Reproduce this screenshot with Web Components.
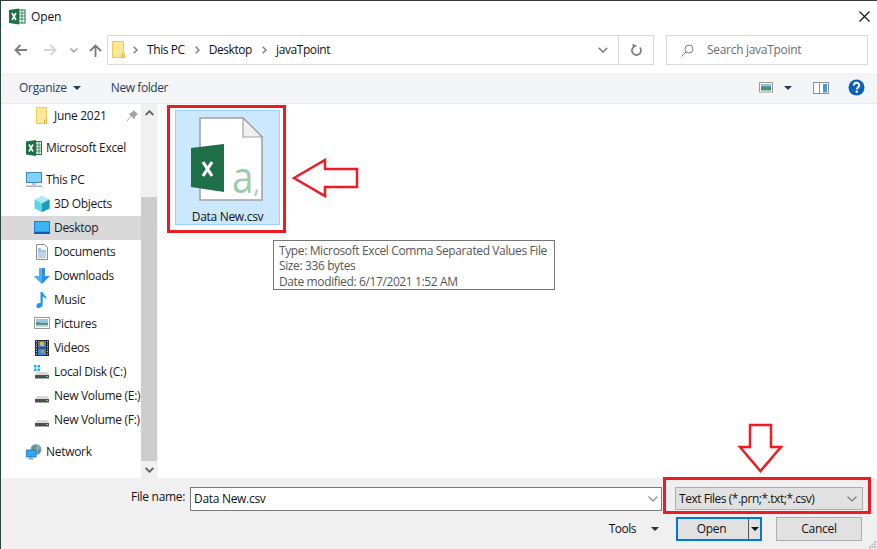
<!DOCTYPE html>
<html>
<head>
<meta charset="utf-8">
<title>Open</title>
<style>
	html, body { margin: 0; padding: 0; background: white; }
	body { font: 12px/16px "Open Sans", "Noto Sans", sans-serif; letter-spacing: -0.3px; color: #111; overflow: hidden; }
</style>
</head>
<body>

<open-dialog>
	<title-bar slot="title">
		<svg slot="icon" width="17" height="17" viewBox="0 0 17 17"><rect x="7" y="2" width="9" height="13" fill="#fff" stroke="#1e7145"/><path d="M10 2v13M13 2v13M7 5h9M7 8h9M7 11h9" stroke="#1e7145" stroke-width=".8"/><path d="M0 2l10-1.500v16l-10-1.500z" fill="#1e7145"/><path d="M3 5l4 7M7 5l-4 7" stroke="#fff" stroke-width="1.600"/></svg>
		Open
	</title-bar>

	<address-bar slot="address"></address-bar>
	<tool-bar slot="tools"></tool-bar>

	<nav-pane slot="nav">
		<nav-item level="1" pin>
			<svg slot="icon" width="16" height="18" viewBox="0 0 16 18"><path d="M2.500.500h10v16h-10z" fill="#ffe79c" stroke="#ecc94f"/><path d="M10.500 13h2v3.500h-2z" fill="#ffe79c" stroke="#dcb53c"/></svg>
			June 2021
		</nav-item>
		<nav-item gap>
			<svg slot="icon" width="16" height="16" viewBox="0 0 16 16"><rect x="7" y="1.500" width="8.500" height="13" fill="#fff" stroke="#1e7145"/><path d="M10 2v12M13 2v12M7 5h8M7 8h8M7 11h8" stroke="#1e7145" stroke-width=".8"/><path d="M0 1.500l10-1.500v16l-10-1.500z" fill="#1e7145"/><path d="M3 4.500l4 7M7 4.500l-4 7" stroke="#fff" stroke-width="1.600"/></svg>
			Microsoft Excel
		</nav-item>
		<nav-item gap>
			<svg slot="icon" width="16" height="16" viewBox="0 0 16 16"><rect x=".500" y=".500" width="15" height="10" fill="#7fd0fb" stroke="#3f88b8"/><path d="M6 11h4v2H6z" fill="#b6c3cc"/><path d="M0 13.500h16v1.500H0z" fill="#a5b4bf"/></svg>
			This PC
		</nav-item>
		<nav-item level="1">
			<svg slot="icon" width="16" height="16" viewBox="0 0 16 16"><path d="M8 0l7.500 3.500v9L8 16 .500 12.500v-9z" fill="#5fd6e6"/><path d="M8 7.500L.500 3.500 8 0l7.500 3.500z" fill="#a9eef5"/><path d="M8 7.500v8.500l7.500-3.500v-9z" fill="#1f9cbc"/></svg>
			3D Objects
		</nav-item>
		<nav-item level="1" selected>
			<svg slot="icon" width="16" height="14" viewBox="0 0 16 14"><rect width="16" height="12" fill="#1b7fd6"/><rect x="1" y="1" width="14" height="9.500" fill="#3eb3f5"/><path d="M0 11h16v2H0z" fill="#0e5da6"/></svg>
			Desktop
		</nav-item>
		<nav-item level="1">
			<svg slot="icon" width="16" height="16" viewBox="0 0 16 16"><path d="M2.500.500h8l3 3v12h-11z" fill="#fdfdfd" stroke="#8c8c8c"/><path d="M4 5h3M4 7h8" stroke="#2f8fdc"/><path d="M4 9h8M4 11h8M4 13h8" stroke="#7fa9cc"/></svg>
			Documents
		</nav-item>
		<nav-item level="1">
			<svg slot="icon" width="16" height="16" viewBox="0 0 16 16"><path d="M5 0h6v8h5l-8 8-8-8h5z" fill="#2f8fe0"/><path d="M5 0h3v16L0 8h5z" fill="#54aef0"/></svg>
			Downloads
		</nav-item>
		<nav-item level="1">
			<svg slot="icon" width="16" height="16" viewBox="0 0 16 16"><path d="M6.500 0h2.200c.5 3 4.300 3.500 3.800 8-.7-2-2.200-3-3.800-3.200v8c0 2-2 3.200-4.200 3.200S2 14.800 2.500 13.200s2.500-2.500 4-2z" fill="#1e98ea"/></svg>
			Music
		</nav-item>
		<nav-item level="1">
			<svg slot="icon" width="16" height="13" viewBox="0 0 16 13"><rect x=".500" y=".500" width="15" height="11" fill="#fff" stroke="#9a9a9a"/><rect x="2" y="2" width="12" height="4" fill="#9bc6e6"/><path d="M2 5.500c3-1 5 .5 7 .5s3-.5 5 0V10H2z" fill="#5f8f80"/><path d="M2 8h12v2H2z" fill="#c3d7d0"/></svg>
			Pictures
		</nav-item>
		<nav-item level="1">
			<svg slot="icon" width="16" height="16" viewBox="0 0 16 16"><rect x="1" width="14" height="16" fill="#2b2b2b"/><rect x="4" y="1" width="8" height="6.500" fill="#3f7fc4"/><rect x="4" y="8.500" width="8" height="6.500" fill="#2f8ae0"/><path d="M6 2h4v4H6z" fill="#e3b53a"/><path d="M7 10h3v3H7z" fill="#e08a2a"/><path d="M2 1.500h1M2 4h1M2 6.500h1M2 9h1M2 11.500h1M2 14h1M13 1.500h1M13 4h1M13 6.500h1M13 9h1M13 11.500h1M13 14h1" stroke="#ddd"/></svg>
			Videos
		</nav-item>
		<nav-item level="1">
			<svg slot="icon" width="16" height="16" viewBox="0 0 16 16"><path d="M0 1h2.500v2.500H0zM3.500 1H6v2.500H3.500zM0 4.500h2.500V7H0zM3.500 4.500H6V7H3.500z" fill="#16b4ee"/><path d="M3 8h10l2 3.500H1z" fill="#d8d8d8"/><rect x="1" y="11" width="14" height="3.500" fill="#4f4f4f"/><path d="M12 12h2v1h-2z" fill="#5fe05f"/></svg>
			Local Disk (C:)
		</nav-item>
		<nav-item level="1">
			<svg slot="icon" width="16" height="16" viewBox="0 0 16 16"><path d="M3 8h10l2 3.500H1z" fill="#d8d8d8"/><rect x="1" y="11" width="14" height="3.500" fill="#4f4f4f"/><path d="M12 12h2v1h-2z" fill="#5fe05f"/></svg>
			New Volume (E:)
		</nav-item>
		<nav-item level="1">
			<svg slot="icon" width="16" height="16" viewBox="0 0 16 16"><path d="M3 8h10l2 3.500H1z" fill="#d8d8d8"/><rect x="1" y="11" width="14" height="3.500" fill="#4f4f4f"/><path d="M12 12h2v1h-2z" fill="#5fe05f"/></svg>
			New Volume (F:)
		</nav-item>
		<nav-item gap>
			<svg slot="icon" width="16" height="16" viewBox="0 0 16 16"><circle cx="10" cy="5.500" r="5.500" fill="#7fa7c7"/><path d="M7 2c2-1 4 0 3 2s-3 1-3 3-2-3 0-5zM12 6l3-1c0 3-2 5-3 5z" fill="#5c9a6a"/><rect y="6" width="10" height="7" fill="#35a6ee" stroke="#1e6fb0" stroke-width=".8"/><path d="M3.500 13h3v1.500h-3zM2 14.500h6v1H2z" fill="#8fa5b5"/></svg>
			Network
		</nav-item>
	</nav-pane>

	<file-tile slot="files" name="Data New.csv"></file-tile>
	<file-footer slot="footer"></file-footer>

	<file-tip slot="overlay">
		<div>Type: Microsoft Excel Comma Separated Values File</div>
		<div>Size: 336 bytes</div>
		<div>Date modified: 6/17/2021 1:52 AM</div>
	</file-tip>
	<mark-box slot="overlay" style="left:166px;top:104px;width:119px;height:128px"></mark-box>
	<mark-box slot="overlay" style="left:662px;top:476px;width:208px;height:37px"></mark-box>
	<svg slot="overlay" style="position:absolute;left:-1px;top:-1px;pointer-events:none" width="877" height="549" fill="none" stroke="#ed1c24" stroke-width="2.500">
		<path d="M294 178L325 160V169H357V187H325V196Z"/>
		<path d="M750 425H771V447H781L760.500 471L740 447H750Z"/>
	</svg>
</open-dialog>

<script>
	const FONT = '"Open Sans", "Noto Sans", sans-serif';

	function shadow(el, html)
	{
		const root = el.attachShadow({mode: 'open'});
		root.innerHTML = html;
		return root;
	}

	customElements.define('open-dialog',
		class extends HTMLElement
		{
			constructor()
			{
				super();
				shadow(this, `
					<style>
						:host {
							display: flex;
							flex-direction: column;
							position: relative;
							box-sizing: border-box;
							width: 877px;
							height: 549px;
							border-top: 1px solid #3a3a3a;
							border-left: 1px solid #24483a;
							background: white;
							overflow: hidden;
						}
						.main {
							display: flex;
							flex: 1;
							min-height: 0;
						}
						.files {
							flex: 1;
							padding: 6px 0 0 17px;
							border-left: 1px solid #f4f4f4;
						}
					</style>
					<slot name="title"></slot>
					<slot name="address"></slot>
					<slot name="tools"></slot>
					<div class="main">
						<slot name="nav"></slot>
						<div class="files"><slot name="files"></slot></div>
					</div>
					<slot name="footer"></slot>
					<slot name="overlay"></slot>
				`);
			}
		}
	);

	customElements.define('title-bar',
		class extends HTMLElement
		{
			constructor()
			{
				super();
				shadow(this, `
					<style>
						:host {
							display: flex;
							align-items: center;
							gap: 5px;
							height: 31px;
							padding: 0 7px 0 8px;
							letter-spacing: -0.1px;
						}
						.x { margin-left: auto; display: block; }
						::slotted(svg) { display: block; }
					</style>
					<slot name="icon"></slot>
					<slot></slot>
					<svg class="x" width="11" height="11" viewBox="0 0 11 11" stroke="#111" stroke-width="1.100"><path d="M.5 .5l10 10M10.500 .5L.5 10.500"/></svg>
				`);
			}
		}
	);

	customElements.define('address-bar',
		class extends HTMLElement
		{
			constructor()
			{
				super();
				shadow(this, `
					<style>
						:host {
							display: flex;
							box-sizing: border-box;
							height: 41px;
							padding: 3px 0 0 13px;
						}
						svg { display: block; flex: none; }
						.nav { display: flex; align-items: center; height: 30px; width: 93px; }
						.box {
							display: flex;
							align-items: center;
							box-sizing: border-box;
							height: 30px;
							border: 1px solid #d9d9d9;
						}
						.path { width: 547px; letter-spacing: -0.42px; }
						.path .sep { margin: 0 9px 0 10px; }
						.path .end { margin-left: auto; margin-right: 10px; }
						.refresh {
							width: 34px;
							height: 28px;
							display: flex;
							align-items: center;
							justify-content: center;
							border-left: 1px solid #d9d9d9;
						}
						.search {
							width: 202px;
							margin-left: 12px;
							padding-left: 14px;
							color: #6d6d6d;
						}
						.search svg { margin-right: 13px; }
					</style>
					<div class="nav">
						<svg width="13" height="12" viewBox="0 0 13 12" fill="none" stroke="#7a7a7a" stroke-width="1.800"><path d="M13 6H2M6.500 1L1.500 6l5 5"/></svg>
						<svg style="margin-left:17px" width="13" height="12" viewBox="0 0 13 12" fill="none" stroke="#d4d4d4" stroke-width="1.800"><path d="M0 6h11M6.500 1l5 5-5 5"/></svg>
						<svg style="margin-left:13px" width="8" height="5" viewBox="0 0 8 5" fill="none" stroke="#9c9c9c" stroke-width="1.400"><path d="M.5 .5L4 4 7.500 .5"/></svg>
						<svg style="margin-left:11px" width="13" height="13" viewBox="0 0 13 13" fill="none" stroke="#7a7a7a" stroke-width="1.800"><path d="M6.500 13V2M1 7l5.500-5.500L12 7"/></svg>
					</div>
					<div class="box path">
						<svg style="margin-left:4px" width="14" height="18" viewBox="0 0 14 18"><path d="M.5 .5h11v16H.5z" fill="#ffe79c" stroke="#ecc94f"/><path d="M10 13h2.500v3.500H10z" fill="#ffe79c" stroke="#dcb53c"/></svg>
						<svg class="sep" style="margin-left:7px" width="5" height="8" viewBox="0 0 5 8" fill="none" stroke="#7d7d7d" stroke-width="1.400"><path d="M.7 .7L4 4 .7 7.300"/></svg>
						<span>This PC</span>
						<svg class="sep" width="5" height="8" viewBox="0 0 5 8" fill="none" stroke="#7d7d7d" stroke-width="1.400"><path d="M.7 .7L4 4 .7 7.300"/></svg>
						<span>Desktop</span>
						<svg class="sep" width="5" height="8" viewBox="0 0 5 8" fill="none" stroke="#7d7d7d" stroke-width="1.400"><path d="M.7 .7L4 4 .7 7.300"/></svg>
						<span>javaTpoint</span>
						<svg class="end" width="10" height="6" viewBox="0 0 10 6" fill="none" stroke="#7d7d7d" stroke-width="1.600"><path d="M.7 .7L5 5 9.300 .7"/></svg>
						<div class="refresh">
							<svg width="11" height="12" viewBox="0 0 11 12" fill="none" stroke="#7d7d7d" stroke-width="1.700"><path d="M8.800 3.500A4.500 4.500 0 1 1 5.500 2H2.500M2.500 0v3"/></svg>
						</div>
					</div>
					<div class="box search">
						<svg width="13" height="13" viewBox="0 0 13 13" fill="none" stroke="#7d7d7d"><circle cx="8" cy="5" r="4"/><path d="M5 8l-4.500 4.500"/></svg>
						<span>Search javaTpoint</span>
					</div>
				`);
			}
		}
	);

	customElements.define('tool-bar',
		class extends HTMLElement
		{
			constructor()
			{
				super();
				shadow(this, `
					<style>
						:host {
							display: flex;
							align-items: center;
							box-sizing: border-box;
							height: 31px;
							padding: 0 12px 1px 18px;
							background: #f4f5f7;
							border-bottom: 1px solid #ececec;
							color: #1f3d60;
						}
						svg { display: block; flex: none; }
						.caret { margin-left: 6px; }
						.new { margin-left: 30px; letter-spacing: -0.42px; }
					</style>
					<span>Organize</span>
					<svg class="caret" width="8" height="4" viewBox="0 0 8 4" fill="#1f3d60"><path d="M0 0h8L4 4z"/></svg>
					<span class="new">New folder</span>
					<svg style="margin-left:auto" width="15" height="11" viewBox="0 0 15 11"><rect x=".5" y=".5" width="13" height="9.500" fill="#fff" stroke="#9a9a9a"/><rect x="2" y="2" width="10" height="3" fill="#8fc0e3"/><path d="M2 4.500c3-1 6 .5 10 0V8.500H2z" fill="#4f8a72"/></svg>
					<svg style="margin-left:10px" width="8" height="4" viewBox="0 0 8 4" fill="#1f3d60"><path d="M0 0h8L4 4z"/></svg>
					<svg style="margin-left:21px" width="16" height="12" viewBox="0 0 16 12"><rect x=".5" y=".5" width="15" height="11" fill="#fff" stroke="#8f8f8f"/><rect x="10" y="2" width="4" height="8.500" fill="#3f98e4"/><path d="M6.500 1v10" stroke="#8f8f8f"/></svg>
					<svg style="margin-left:19px" width="17" height="17" viewBox="0 0 17 17"><circle cx="8.500" cy="8.500" r="8" fill="#0a62b5"/><path d="M5.800 6.500c0-3.500 5.500-3.500 5.500-.2 0 2-2.500 2.200-2.500 4" fill="none" stroke="#fff" stroke-width="2"/><path d="M7.700 11.500h2.200v2.200H7.700z" fill="#fff"/></svg>
				`);
			}
		}
	);

	customElements.define('nav-pane',
		class extends HTMLElement
		{
			constructor()
			{
				super();
				shadow(this, `
					<style>
						:host {
							display: flex;
							flex: none;
							width: 156px;
							height: 100%;
						}
						.list { width: 140px; overflow: hidden; }
						.scroll {
							display: flex;
							flex-direction: column;
							align-items: center;
							width: 16px;
							background: #f0f0f0;
						}
						.btn {
							display: flex;
							align-items: center;
							justify-content: center;
							flex: none;
							width: 100%;
							height: 17px;
						}
						.track { flex: 1; width: 100%; padding-top: 76px; box-sizing: border-box; }
						.thumb { height: 264px; background: #cdcdcd; }
						svg { display: block; }
					</style>
					<div class="list"><slot></slot></div>
					<div class="scroll">
						<div class="btn"><svg width="9" height="6" viewBox="0 0 9 6" fill="none" stroke="#606060" stroke-width="1.800"><path d="M.7 5L4.500 1.200 8.300 5"/></svg></div>
						<div class="track"><div class="thumb"></div></div>
						<div class="btn"><svg width="9" height="6" viewBox="0 0 9 6" fill="none" stroke="#606060" stroke-width="1.800"><path d="M.7 1L4.500 4.800 8.300 1"/></svg></div>
					</div>
				`);
			}
		}
	);

	customElements.define('nav-item',
		class extends HTMLElement
		{
			constructor()
			{
				super();
				shadow(this, `
					<style>
						:host {
							display: flex;
							align-items: center;
							gap: 4px;
							height: 24px;
							padding-left: 24px;
							padding-bottom: 1px;
							box-sizing: border-box;
							white-space: nowrap;
							color: #1a1a1a;
						}
						:host([level="1"]) { padding-left: 32px; }
						:host([gap]) { margin-top: 8px; }
						:host([selected]) { background: #d9d9d9; }
						.icon {
							display: flex;
							align-items: center;
							justify-content: center;
							flex: none;
							width: 17px;
							height: 18px;
						}
						.pin { display: none; margin-left: auto; margin-right: 3px; }
						:host([pin]) .pin { display: block; }
						::slotted(svg) { display: block; }
					</style>
					<span class="icon"><slot name="icon"></slot></span>
					<slot></slot>
					<svg class="pin" width="11" height="11" viewBox="0 0 11 11" fill="#a3a3a3"><path d="M6.500 0L11 4.500 9.500 5 8 7l-.5 2.500L1.800 4 4 2.800 6 1.500z"/><path d="M3.500 6.500L0 11" stroke="#a3a3a3" fill="none"/></svg>
				`);
			}
		}
	);

	customElements.define('file-tile',
		class extends HTMLElement
		{
			constructor()
			{
				super();
				const name = this.getAttribute('name');
				shadow(this, `
					<style>
						:host {
							display: flex;
							flex-direction: column;
							align-items: center;
							box-sizing: border-box;
							width: 105px;
							height: 115px;
							background: #cce8ff;
							border: 1px solid #99d1ff;
							color: #111;
						}
						svg { display: block; margin: 5px 0 0 0; flex: none; }
						span { margin-top: 1px; }
						text { font-family: ${FONT}; letter-spacing: 0; }
					</style>
					<svg width="103" height="92" viewBox="0 0 103 92">
						<path d="M24 2H67L86 21V84H24Z" fill="#fff" stroke="#a3a3a3" stroke-width="1.600"/>
						<path d="M67 2V21H86Z" fill="#f1f1f1" stroke="#a3a3a3" stroke-width="1.200"/>
						<path d="M15 32L48 28V76L15 71Z" fill="#1f6f48"/>
						<path d="M27 46L36 60M36 46L27 60" stroke="#fff" stroke-width="3.200"/>
						<text transform="translate(56 77) scale(.88 1)" fill="#9dcbb0" font-size="44">a<tspan font-size="26">,</tspan></text>
					</svg>
					<span>${name}</span>
				`);
			}
		}
	);

	customElements.define('file-tip',
		class extends HTMLElement
		{
			constructor()
			{
				super();
				shadow(this, `
					<style>
						:host {
							display: block;
							position: absolute;
							left: 272px;
							top: 239px;
							box-sizing: border-box;
							width: 282px;
							height: 50px;
							padding: 1.900px 5px;
							background: white;
							border: 1px solid #767676;
							color: #575757;
							line-height: 15.500px;
							letter-spacing: -0.38px;
							white-space: nowrap;
						}
					</style>
					<slot></slot>
				`);
			}
		}
	);

	customElements.define('mark-box',
		class extends HTMLElement
		{
			constructor()
			{
				super();
				shadow(this, `
					<style>
						:host {
							display: block;
							position: absolute;
							box-sizing: border-box;
							border: 3px solid #ed1c24;
							pointer-events: none;
						}
					</style>
				`);
			}
		}
	);

	customElements.define('file-footer',
		class extends HTMLElement
		{
			constructor()
			{
				super();
				shadow(this, `
					<style>
						:host {
							display: grid;
							grid-template-columns: 472px 188px;
							grid-template-rows: 24px 24px;
							column-gap: 13px;
							row-gap: 6px;
							box-sizing: border-box;
							height: 71px;
							padding: 9px 0 0 189px;
							background: #f0f0f0;
							position: relative;
						}
						svg { display: block; flex: none; }
						.label { position: absolute; left: 130px; top: 11px; color: #111; }
						.name, .type {
							display: flex;
							align-items: center;
							justify-content: space-between;
							box-sizing: border-box;
							padding: 0 4px 0 3px;
						}
						.name { background: white; border: 1px solid #7a7a7a; padding-right: 3px; }
						.type { height: 23px; background: #e1e1e1; border: 1px solid #adadad; padding-right: 5px; letter-spacing: -0.47px; }
						.btns {
							grid-column: 1 / 3;
							display: flex;
							align-items: center;
							justify-content: flex-end;
							gap: 14px;
						}
						.tools { display: flex; align-items: center; gap: 15px; margin-right: 3px; letter-spacing: -0.5px; }
						.btn {
							display: flex;
							align-items: center;
							justify-content: center;
							box-sizing: border-box;
							width: 86px;
							height: 24px;
							background: #e1e1e1;
							border: 1px solid #adadad;
						}
						.open { position: relative; border: 2px solid #0078d7; padding-right: 15px; }
						.split { position: absolute; right: 11px; top: 0; bottom: 0; width: 1px; background: #555; }
						.open svg { position: absolute; right: 1px; top: 8px; }
						.grip { position: absolute; right: 1px; bottom: 1px; }
					</style>
					<span class="label">File name:</span>
					<div class="name">
						<span>Data New.csv</span>
						<svg width="10" height="6" viewBox="0 0 10 6" fill="none" stroke="#8a8a8a" stroke-width="1.200"><path d="M.5 .5L5 5 9.500 .5"/></svg>
					</div>
					<div class="type">
						<span>Text Files (*.prn;*.txt;*.csv)</span>
						<svg width="10" height="6" viewBox="0 0 10 6" fill="none" stroke="#777" stroke-width="1.200"><path d="M.5 .5L5 5 9.500 .5"/></svg>
					</div>
					<div class="btns">
						<div class="tools">
							<span>Tools</span>
							<svg width="8" height="4" viewBox="0 0 8 4" fill="#333"><path d="M0 0h8L4 4z"/></svg>
						</div>
						<div class="btn open">
							<span>Open</span>
							<div class="split"></div>
							<svg width="8" height="4" viewBox="0 0 8 4" fill="#111"><path d="M0 0h8L4 4z"/></svg>
						</div>
						<div class="btn" style="margin-right:1px">Cancel</div>
					</div>
					<svg class="grip" width="7" height="7" viewBox="0 0 7 7" fill="#c4c4c4"><path d="M5 0h2v2H5zM2.500 2.500h2v2h-2zM5 2.500h2v2H5zM0 5h2v2H0zM2.500 5h2v2h-2zM5 5h2v2H5z"/></svg>
				`);
			}
		}
	);
</script>
</body>
</html>
